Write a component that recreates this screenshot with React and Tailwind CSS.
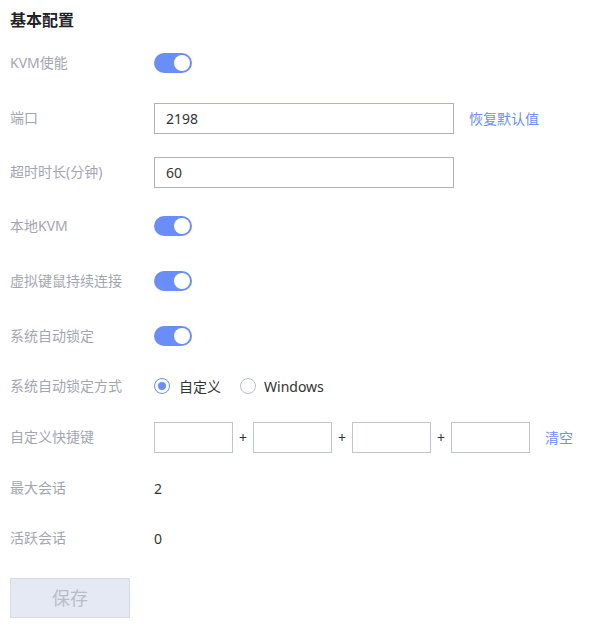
import React from "react";

const Toggle = () => (
  <div className="w-[38px] h-[20px] rounded-full bg-[#6a8ef8] flex items-center justify-end pr-[2px]">
    <div className="w-[16px] h-[16px] rounded-full bg-white" />
  </div>
);

const Row = ({ label, children, gap }) => (
  <div className={`flex items-center h-[32px] ${gap}`}>
    <div className="w-[144px] text-[14px] text-[#a3a6b1] leading-none">{label}</div>
    <div className="flex items-center">{children}</div>
  </div>
);

const KeyBox = () => (
  <input type="text" className="w-[79px] h-[31px] border border-[#c0c4d0] outline-none" />
);

const Plus = () => <span className="w-[20px] text-center text-[14px] text-[#333]">+</span>;

export default function App() {
  return (
    <div
      className="w-[614px] h-[634px] bg-white px-[10px] text-[#333]"
      style={{ fontFamily: '"Noto Sans", "Noto Sans CJK SC", sans-serif' }}
    >
      <div className="h-[47px] pt-[10px] text-[16px] font-bold text-[#1f2329] leading-[20px]">基本配置</div>
      <Row label="KVM使能" gap="mb-[23px]">
        <Toggle />
      </Row>
      <Row label="端口" gap="mb-[22px]">
        <input
          type="text"
          defaultValue="2198"
          className="w-[300px] h-[31px] border border-[#b0b3bd] px-[11px] text-[14px] text-[#333] outline-none"
        />
        <span className="ml-[15px] text-[14px] text-[#6b8ef7]">恢复默认值</span>
      </Row>
      <Row label="超时时长(分钟)" gap="mb-[22px]">
        <input
          type="text"
          defaultValue="60"
          className="w-[300px] h-[31px] border border-[#b0b3bd] px-[11px] text-[14px] text-[#333] outline-none"
        />
      </Row>
      <Row label="本地KVM" gap="mb-[23px]">
        <Toggle />
      </Row>
      <Row label="虚拟键鼠持续连接" gap="mb-[23px]">
        <Toggle />
      </Row>
      <Row label="系统自动锁定" gap="mb-[18px]">
        <Toggle />
      </Row>
      <Row label="系统自动锁定方式" gap="mb-[19px]">
        <span className="w-[16px] h-[16px] rounded-full border border-[#6a8ef8] flex items-center justify-center">
          <span className="w-[8px] h-[8px] rounded-full bg-[#6a8ef8]" />
        </span>
        <span className="ml-[9px] text-[14px] text-[#333]">自定义</span>
        <span className="ml-[19px] w-[16px] h-[16px] rounded-full border border-[#b8bcc8]" />
        <span className="ml-[8px] text-[14px] text-[#333]">Windows</span>
      </Row>
      <Row label="自定义快捷键" gap="mb-[19px]">
        <KeyBox />
        <Plus />
        <KeyBox />
        <Plus />
        <KeyBox />
        <Plus />
        <KeyBox />
        <span className="ml-[15px] text-[14px] text-[#6b8ef7]">清空</span>
      </Row>
      <Row label="最大会话" gap="mb-[18px]">
        <span className="text-[14px] text-[#333]">2</span>
      </Row>
      <Row label="活跃会话" gap="mb-[24px]">
        <span className="text-[14px] text-[#333]">0</span>
      </Row>
      <button className="w-[120px] h-[40px] bg-[#e5e9f3] border border-[#d5dae6] text-[18px] text-[#b8bdc9]">
        保存
      </button>
    </div>
  );
}
